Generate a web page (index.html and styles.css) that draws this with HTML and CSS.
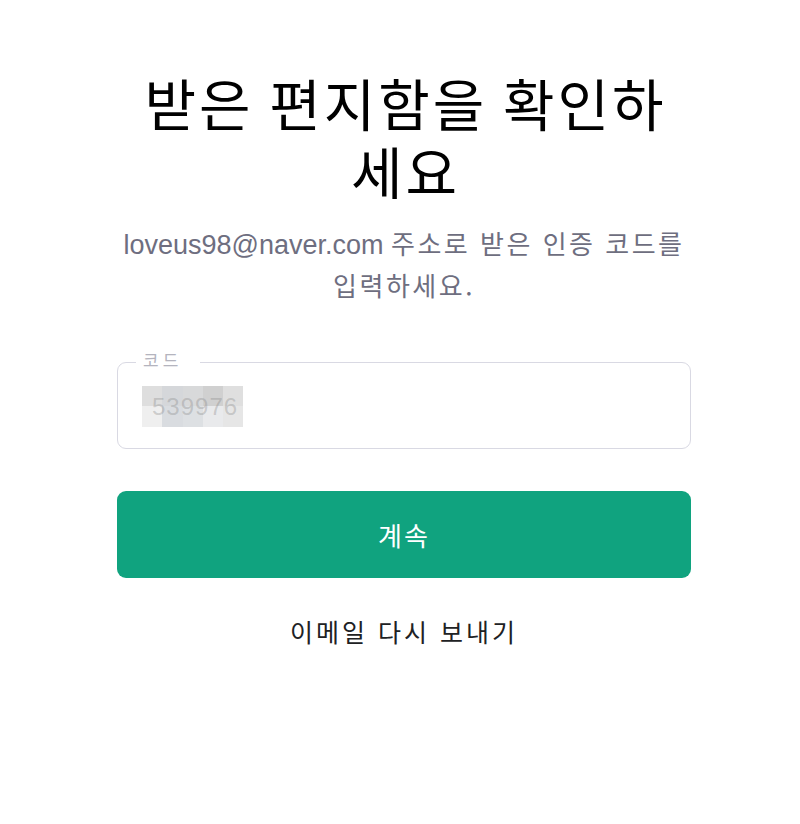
FILE: index.html
```html
<!DOCTYPE html>
<html lang="ko">
<head>
<meta charset="utf-8">
<title>받은 편지함을 확인하세요</title>
<link rel="stylesheet" href="styles.css">
</head>
<body>
<main class="page">
  <section class="card">
    <h1 class="title">받은 편지함을 확인하세요</h1>
    <p class="subtitle">loveus98@naver.com <span class="ko">주소로 받은 인증 코드를 입력하세요.</span></p>
    <div class="field">
      <span class="label">코드</span>
      <div class="value">
        <span class="mosaic" aria-hidden="true">
          <i class="m1"></i><i class="m2"></i><i class="m3"></i><i class="m4"></i><i class="m5"></i>
          <i class="m6"></i><i class="m7"></i><i class="m8"></i><i class="m9"></i><i class="m10"></i>
        </span>
        <span class="digits">539976</span>
      </div>
    </div>
    <button class="continue" type="button">계속</button>
    <a class="resend" href="#">이메일 다시 보내기</a>
  </section>
</main>
</body>
</html>
```
FILE: styles.css
```css
html, body {
  margin: 0;
  padding: 0;
  background: #ffffff;
}
body {
  font-family: "Liberation Sans", Arial, "Noto Sans CJK KR", sans-serif;
  color: #202123;
}
.page {
  width: 800px;
  height: 824px;
  box-sizing: border-box;
  padding-left: 8px;
  display: flex;
  justify-content: center;
}
.card {
  width: 574px;
  display: flex;
  flex-direction: column;
  align-items: stretch;
  padding-top: 68px;
}
.title {
  margin: 0 17px;
  padding-left: 3px;
  font-family: "Noto Sans CJK KR", sans-serif;
  font-weight: 400;
  font-size: 56px;
  line-height: 68px;
  letter-spacing: 3px;
  word-spacing: -3px;
  text-align: center;
  color: #000000;
}
.subtitle {
  margin: 19px 4px 0;
  font-size: 27px;
  line-height: 40px;
  text-align: center;
  color: #6e6e80;
}
.ko {
  font-family: "Noto Sans CJK KR", sans-serif;
  font-size: 26px;
  letter-spacing: 2.5px;
}
.field {
  position: relative;
  margin-top: 55px;
  height: 87px;
  box-sizing: border-box;
  border: 1px solid #d9d9e3;
  border-radius: 9px;
  display: flex;
  align-items: center;
  padding-left: 24px;
}
.label {
  position: absolute;
  left: 18px;
  top: -16px;
  padding: 0 18px 0 7px;
  background: #ffffff;
  font-size: 17px;
  line-height: 26px;
  color: #b4b4be;
  font-family: "Noto Sans CJK KR", sans-serif;
  letter-spacing: 4px;
}
.value {
  position: relative;
  width: 101px;
  height: 41px;
  margin-top: 1px;
}
.mosaic {
  position: absolute;
  inset: 0;
  display: grid;
  grid-template-columns: 20px 21px 20px 20px 20px;
  grid-template-rows: 20px 21px;
}
.mosaic i { display: block; }
.m1 { background: #dedede; }
.m2 { background: #d5d7da; }
.m3 { background: #d8d9da; }
.m4 { background: #d0d0d0; }
.m5 { background: #dfdfdf; }
.m6 { background: #efefef; }
.m7 { background: #d9dce0; }
.m8 { background: #dde0e3; }
.m9 { background: #e9eaec; }
.m10 { background: #e6e6e6; }
.digits {
  position: absolute;
  left: 10px;
  top: 7px;
  font-size: 24px;
  line-height: 28px;
  color: rgba(120, 120, 120, 0.3);
  letter-spacing: 1px;
}
.continue {
  margin-top: 42px;
  height: 87px;
  border: none;
  border-radius: 9px;
  background: #10a37f;
  color: #ffffff;
  font-family: "Noto Sans CJK KR", sans-serif;
  font-size: 26px;
  letter-spacing: 2px;
  cursor: pointer;
}
.resend {
  margin-top: 35px;
  align-self: center;
  font-family: "Noto Sans CJK KR", sans-serif;
  font-size: 25px;
  line-height: 36px;
  letter-spacing: 3px;
  color: #202123;
  text-decoration: none;
}
```
